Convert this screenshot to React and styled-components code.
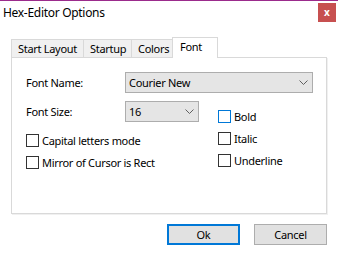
import React from 'react';
import styled, { createGlobalStyle } from 'styled-components';

const GlobalStyle = createGlobalStyle`
  html, body {
    margin: 0;
    padding: 0;
    background: #fff;
  }
  body {
    font-family: "Noto Sans", "Open Sans", sans-serif;
    font-size: 11px;
    letter-spacing: -0.3px;
    color: #000;
  }
`;

const Window = styled.div`
  width: 338px;
  height: 257px;
  display: flex;
  flex-direction: column;
  border-top: 1px solid #9b2b8c;
  box-sizing: border-box;
  background: #fff;
  overflow: hidden;
`;

const TitleBar = styled.div`
  display: flex;
  align-items: flex-start;
  justify-content: space-between;
  height: 25px;
  padding: 2px 2px 0 3px;
  box-sizing: border-box;
`;

const Title = styled.span`
  font-size: 12px;
  letter-spacing: -0.3px;
  line-height: 20px;
`;

const CloseButton = styled.div`
  width: 18px;
  height: 19px;
  background: #c75050;
  color: #fff;
  font-weight: 700;
  font-size: 10px;
  letter-spacing: 0;
  line-height: 18px;
  text-align: center;
`;

const Body = styled.div`
  display: flex;
  flex-direction: column;
  padding: 11px 11px 0 11px;
`;

const TabStrip = styled.div`
  position: relative;
  z-index: 1;
  display: flex;
  align-items: flex-start;
  height: 21px;
  margin-bottom: -1px;
`;

const Tab = styled.div`
  box-sizing: border-box;
  width: ${p => p.$w}px;
  margin-left: -1px;
  &:first-child { margin-left: 0; }
  border: 1px solid #d9d9d9;
  border-bottom: none;
  background: ${p => (p.$active ? '#fff' : '#f0f0f0')};
  height: ${p => (p.$active ? 21 : 18)}px;
  margin-top: ${p => (p.$active ? 0 : 2)}px;
  padding-left: ${p => (p.$active ? 7 : 6)}px;
  line-height: ${p => (p.$active ? 17 : 18)}px;
  white-space: nowrap;
`;

const Panel = styled.div`
  box-sizing: border-box;
  width: 316px;
  height: 157px;
  border: 1px solid #d9d9d9;
  box-shadow: 1px 1px 0 #f0f0f0;
  background: #fff;
  padding: 14px 0 0 14px;
  display: flex;
  flex-direction: column;
  gap: 8px;
`;

const FieldRow = styled.div`
  display: flex;
  align-items: center;
  height: 21px;
`;

const Label = styled.span`
  width: 99px;
  flex: none;
`;

const Combo = styled.div`
  box-sizing: border-box;
  width: ${p => p.$w}px;
  height: 21px;
  background: #e5e5e5;
  border: 1px solid #adadad;
  display: flex;
  align-items: center;
  justify-content: space-between;
  padding: 0 4px 0 3px;
`;

const Options = styled.div`
  display: flex;
`;

const LeftColumn = styled.div`
  width: 192px;
  display: flex;
  flex-direction: column;
  gap: 9px;
  & > :nth-child(2) { margin-top: 3px; }
`;

const RightColumn = styled.div`
  display: flex;
  flex-direction: column;
  gap: 9px;
  padding-top: 9px;
`;

const Check = styled.label`
  display: flex;
  align-items: center;
  height: 13px;
  gap: 3px;
  white-space: nowrap;
`;

const Box = styled.span`
  box-sizing: border-box;
  width: 13px;
  height: 13px;
  flex: none;
  border: 1px solid ${p => (p.$focus ? '#0078d7' : '#333')};
  background: #fff;
`;

const ButtonRow = styled.div`
  display: flex;
  justify-content: flex-end;
  gap: 14px;
  width: 316px;
  margin-top: 10px;
`;

const Button = styled.div`
  box-sizing: border-box;
  width: 73px;
  height: 21px;
  background: #e1e1e1;
  border: ${p => (p.$default ? '2px solid #0078d7' : '1px solid #adadad')};
  display: flex;
  align-items: center;
  justify-content: center;
`;

const Chevron = () => (
  <svg width="9" height="5" viewBox="0 0 9 5">
    <path d="M0.5 0.5 L4.5 4.5 L8.5 0.5" fill="none" stroke="#606060" strokeWidth="1" />
  </svg>
);

const App = () => (
  <>
    <GlobalStyle />
    <Window>
      <TitleBar>
        <Title>Hex-Editor Options</Title>
        <CloseButton>x</CloseButton>
      </TitleBar>
      <Body>
        <TabStrip>
          <Tab $w={73}>Start Layout</Tab>
          <Tab $w={49}>Startup</Tab>
          <Tab $w={42}>Colors</Tab>
          <Tab $w={46} $active>Font</Tab>
        </TabStrip>
        <Panel>
          <FieldRow>
            <Label>Font Name:</Label>
            <Combo $w={188}>Courier New<Chevron /></Combo>
          </FieldRow>
          <Options>
            <LeftColumn>
              <FieldRow>
                <Label>Font Size:</Label>
                <Combo $w={74}>16<Chevron /></Combo>
              </FieldRow>
              <Check><Box />Capital letters mode</Check>
              <Check><Box />Mirror of Cursor is Rect</Check>
            </LeftColumn>
            <RightColumn>
              <Check><Box $focus />Bold</Check>
              <Check><Box />Italic</Check>
              <Check><Box />Underline</Check>
            </RightColumn>
          </Options>
        </Panel>
        <ButtonRow>
          <Button $default>Ok</Button>
          <Button>Cancel</Button>
        </ButtonRow>
      </Body>
    </Window>
  </>
);

export default App;
